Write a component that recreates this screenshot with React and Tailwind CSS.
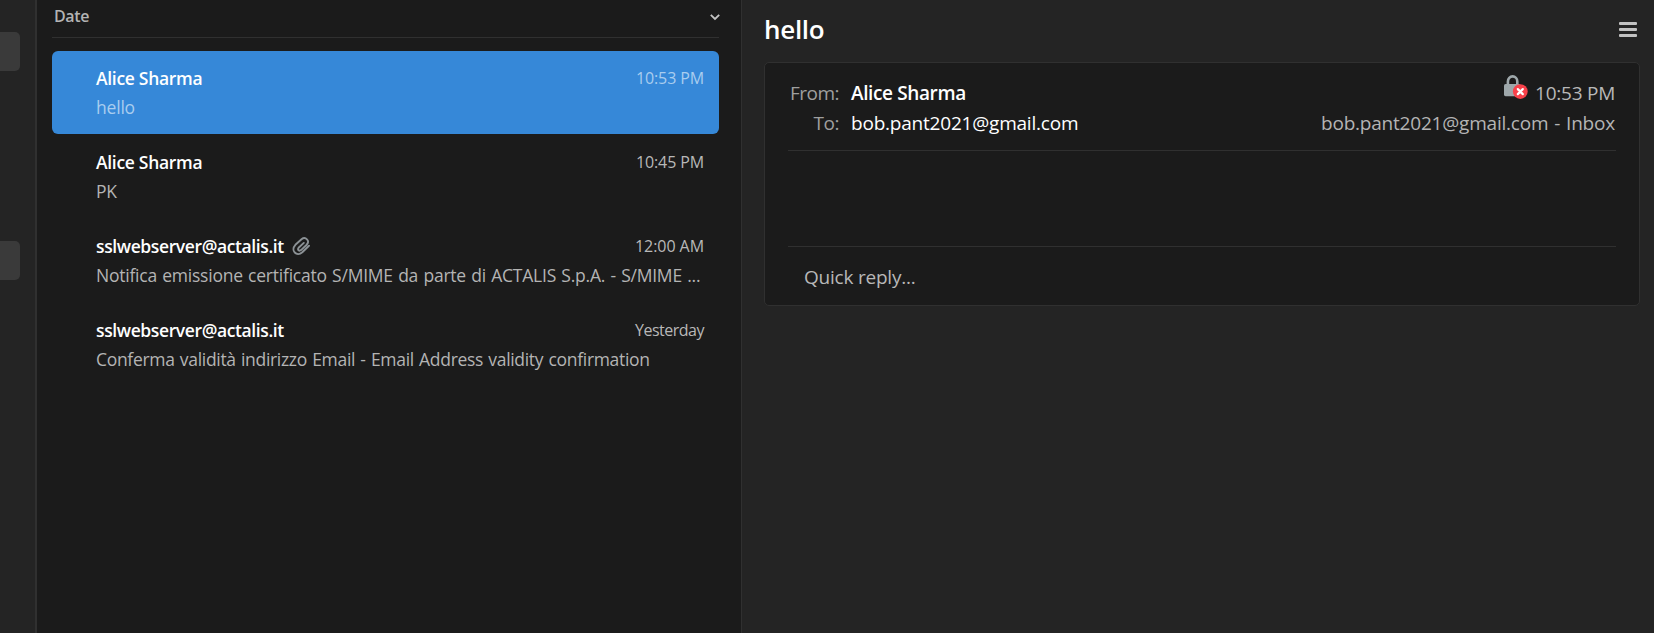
const messages = [
  { sender: 'Alice Sharma', time: '10:53 PM', subject: 'hello', selected: true, tracking: 'tracking-[-0.3px]', subTracking: 'tracking-[-0.2px]', timeTracking: 'tracking-[-0.12px]' },
  { sender: 'Alice Sharma', time: '10:45 PM', subject: 'PK', tracking: 'tracking-[-0.3px]', subTracking: 'tracking-[-0.3px]', timeTracking: 'tracking-[-0.12px]' },
  { sender: 'sslwebserver@actalis.it', time: '12:00 AM', subject: 'Notifica emissione certificato S/MIME da parte di ACTALIS S.p.A. - S/MIME ...', attachment: true, tracking: 'tracking-[-0.39px]', subTracking: 'tracking-[-0.23px]', timeTracking: 'tracking-[-0.05px]' },
  { sender: 'sslwebserver@actalis.it', time: 'Yesterday', subject: 'Conferma validità indirizzo Email - Email Address validity confirmation', tracking: 'tracking-[-0.39px]', subTracking: 'tracking-[-0.31px]', timeTracking: 'tracking-[-0.5px]' },
];

function Paperclip() {
  return (
    <svg className="ml-[8px] h-[20px] w-[19px] shrink-0" viewBox="0 0 19 20" fill="none" stroke="#8b9195" strokeWidth="1.9" strokeLinecap="round" strokeLinejoin="round">
      <path d="M11.8 6.9 6.6 11.8c-1.4 1.9.6 3.7 2.4 2.3l5.7-5.4c3.6-4-1.2-8.6-5.2-5.4L3.4 8.8c-5.2 5.6 1.2 12.4 6.9 7.5l6.7-6.6" />
    </svg>
  );
}

function LockBadge() {
  return (
    <svg className="h-[25px] w-[25px]" viewBox="0 0 25 25">
      <path d="M4.9 10V6.4a4.7 5 0 0 1 9.4 0V10" fill="none" stroke="#9ea7aa" strokeWidth="2.6" />
      <rect x="1" y="9" width="16.5" height="12.2" rx="1.6" fill="#9ea7aa" />
      <circle cx="17.3" cy="16.6" r="7.4" fill="#f8414a" />
      <path d="m14.8 14.1 5 5m0-5-5 5" stroke="#fff" strokeWidth="2.2" strokeLinecap="round" />
    </svg>
  );
}

function Message({ m }) {
  return (
    <li className={`mb-px h-[83px] rounded-[6px] pt-[13px] pr-[15px] pl-[44px] ${m.selected ? 'bg-[#3688d8]' : ''}`}>
      <div className="flex h-[28px] items-center">
        <span className={`text-[17.5px] leading-[28px] font-semibold text-white ${m.tracking}`}>{m.sender}</span>
        {m.attachment && <Paperclip />}
        <span className={`ml-auto text-[16px] leading-[28px] ${m.timeTracking} ${m.selected ? 'text-[#a9cdef]' : 'text-[#b8b8b8]'}`}>{m.time}</span>
      </div>
      <p className={`h-[28px] text-[17.5px] leading-[30px] whitespace-nowrap [word-spacing:1px] ${m.subTracking} ${m.selected ? 'text-[#a9cdef]' : 'text-[#b4b4b4]'}`}>{m.subject}</p>
    </li>
  );
}

export default function App() {
  return (
    <div className="flex h-[633px] w-[1654px] overflow-hidden bg-[#242424] font-['Open_Sans','Noto_Sans',sans-serif]">
      <nav className="flex w-[35px] shrink-0 flex-col gap-[170px] pt-[32px]">
        <div className="h-[39px] w-[20px] rounded-r-[5px] bg-[#3a3a3a]" />
        <div className="h-[39px] w-[20px] rounded-r-[5px] bg-[#3a3a3a]" />
      </nav>
      <section className="w-[707px] shrink-0 border-r border-l-2 border-[#303030] bg-[#1b1b1b] pr-[22px] pl-[15px]">
        <header className="flex h-[38px] items-start justify-between border-b border-[#303030] pt-[3px] pl-[2px]">
          <span className="text-[16px] leading-[26px] font-semibold tracking-[-0.4px] text-[#b4b4b4]">Date</span>
          <svg className="mt-[8px] -mr-[1px] h-[12px] w-[10px]" viewBox="0 0 10 12" fill="none" stroke="#c4c4c4" strokeWidth="1.8">
            <path d="M.8 3.8 5 8l4.2-4.2" />
          </svg>
        </header>
        <ul className="mt-[13px]">
          {messages.map((m, i) => <Message key={i} m={m} />)}
        </ul>
      </section>
      <main className="min-w-0 flex-1 pr-[14px] pl-[22px]">
        <header className="flex h-[62px] items-center justify-between pr-[3px] pb-[4px]">
          <h1 className="text-[26px] leading-[40px] font-semibold tracking-[-0.3px] text-white">hello</h1>
          <div className="mt-px flex w-[18px] flex-col gap-[3px]">
            <i className="h-[3px] rounded-[1px] bg-[#c2c2c2]" />
            <i className="h-[3px] rounded-[1px] bg-[#c2c2c2]" />
            <i className="h-[3px] rounded-[1px] bg-[#c2c2c2]" />
          </div>
        </header>
        <article className="h-[244px] rounded-[5px] border border-[#303030] bg-[#1b1b1b] px-[23px] text-[19px] leading-[30px]">
          <div className="h-[88px] border-b border-[#303030]">
            <div className="flex h-[45px] pt-[15px] pr-px">
              <span className="w-[51px] text-right tracking-[-0.5px] text-[#9f9f9f]">From:</span>
              <span className="ml-[12px] font-semibold tracking-[-0.38px] text-white">Alice Sharma</span>
              <span className="-mt-[3px] ml-auto"><LockBadge /></span>
              <span className="ml-[7px] tracking-[-0.25px] text-[#b8b8b8]">10:53 PM</span>
            </div>
            <div className="flex h-[30px] pr-px">
              <span className="w-[51px] text-right tracking-[-0.5px] text-[#9f9f9f]">To:</span>
              <span className="ml-[12px] tracking-[-0.21px] text-white">bob.pant2021@gmail.com</span>
              <span className="ml-auto tracking-[-0.21px] text-[#b4b4b4] [word-spacing:1.2px]">bob.pant2021@gmail.com - Inbox</span>
            </div>
          </div>
          <div className="h-[96px] border-b border-[#303030]" />
          <p className="pt-[15px] pl-[16px] tracking-[-0.22px] text-[#b8b8b8]">Quick reply...</p>
        </article>
      </main>
    </div>
  );
}
